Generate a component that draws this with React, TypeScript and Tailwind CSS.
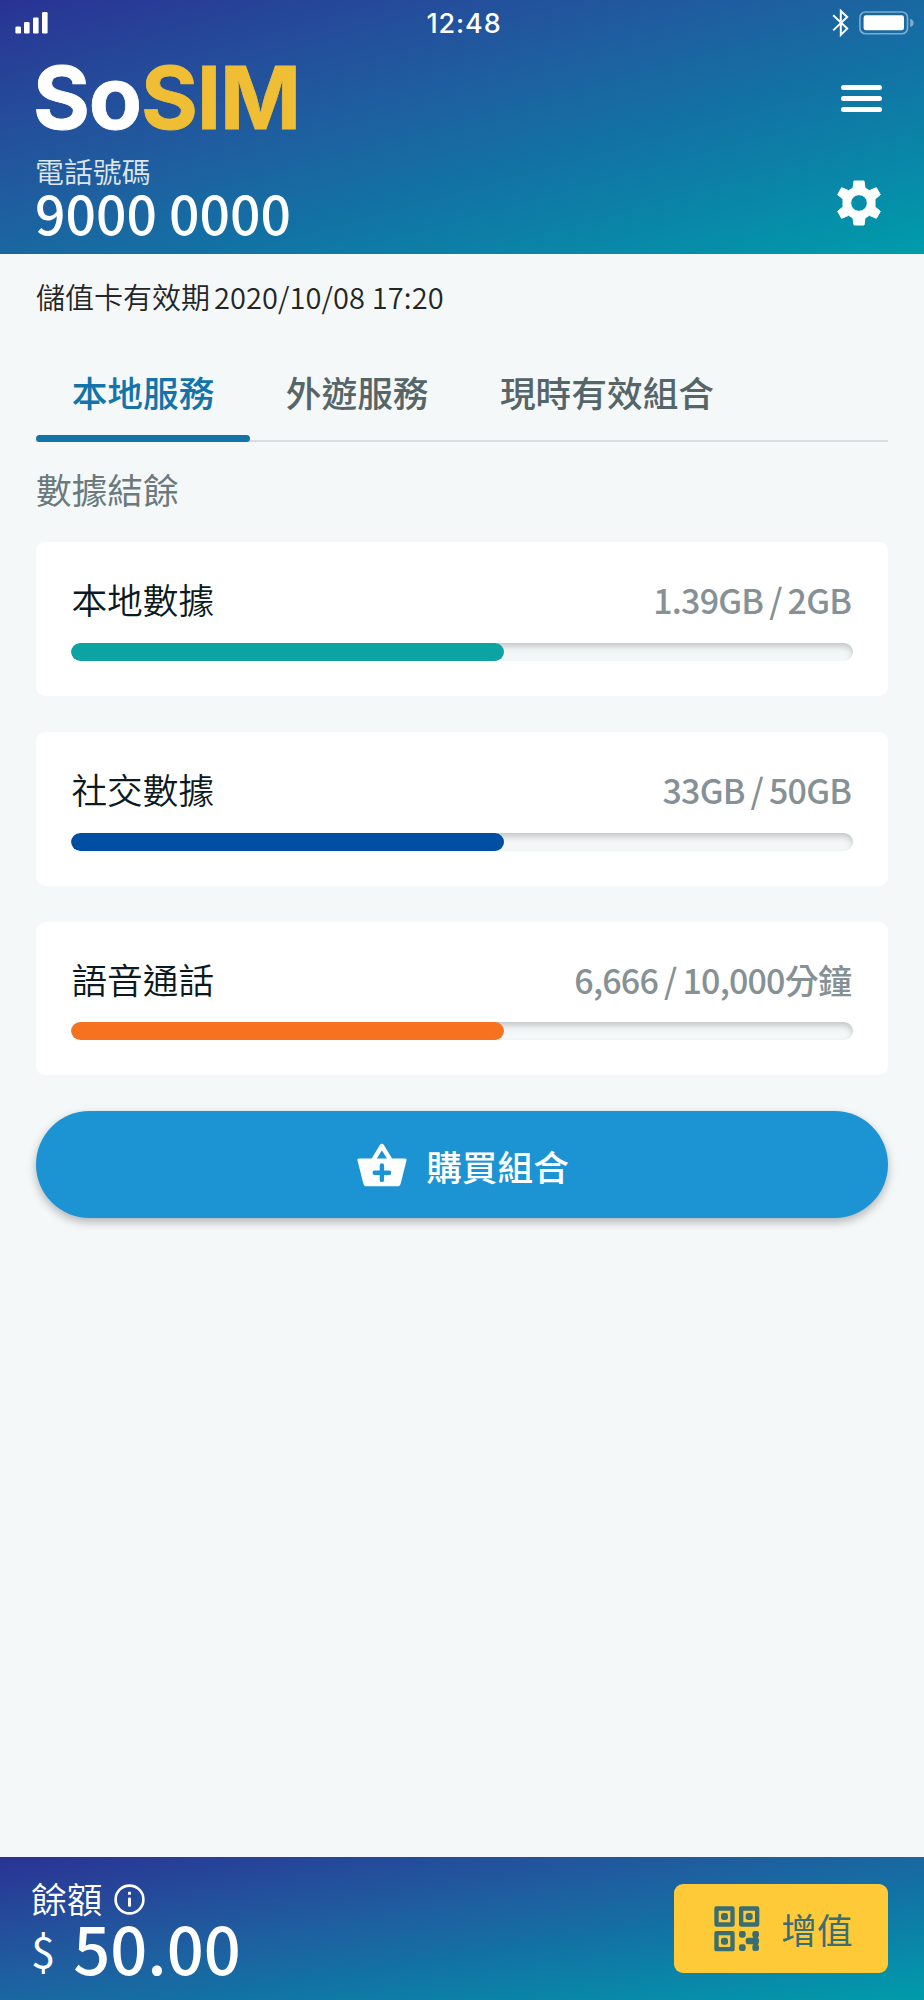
import React from "react";

type Usage = {
  label: string;
  used: string;
  total: string;
  fill: string;
  percent: number;
};

const usages: Usage[] = [
  { label: "本地數據", used: "1.39GB", total: "2GB", fill: "bg-[#0ba4a3]", percent: 55.4 },
  { label: "社交數據", used: "33GB", total: "50GB", fill: "bg-[#004fa3]", percent: 55.4 },
  { label: "語音通話", used: "6,666", total: "10,000分鐘", fill: "bg-[#f67220]", percent: 55.4 },
];

const tabs = ["本地服務", "外遊服務", "現時有效組合"];

function SignalIcon() {
  return (
    <svg width="34" height="22" viewBox="0 0 34 22" fill="#fff">
      <rect x="0.4" y="14.5" width="5.6" height="7" rx="1.2" />
      <rect x="9" y="10" width="5.6" height="11.5" rx="1.2" />
      <rect x="18" y="5.5" width="5.6" height="16" rx="1.2" />
      <rect x="27" y="0" width="5.6" height="21.5" rx="1.2" />
    </svg>
  );
}

function BluetoothIcon() {
  return (
    <svg width="18" height="30" viewBox="0 0 18 30" fill="none" stroke="#fff" strokeWidth="2">
      <path d="M1.2 7.3 15.2 20.6 8.8 26.9V2.9l6.4 6L1.2 22.4" />
    </svg>
  );
}

function BatteryIcon() {
  return (
    <svg width="56" height="24" viewBox="0 0 56 24">
      <rect x="0.9" y="1" width="47.6" height="21.8" rx="5.5" fill="none" stroke="#fff" strokeOpacity="0.45" strokeWidth="1.6" />
      <rect x="4.6" y="4.3" width="40.4" height="15" rx="2.4" fill="#fff" />
      <path d="M51.2 7.8c2.2.6 3.4 2.2 3.4 4.1s-1.2 3.5-3.4 4.1Z" fill="#fff" fillOpacity="0.45" />
    </svg>
  );
}

function GearIcon() {
  return (
    <svg width="44" height="46" viewBox="-66 -69 132 138" fill="#fff" stroke="#fff" strokeWidth="3" strokeLinejoin="round">
      <path
        fillRule="evenodd"
        d="M-15-66H15L18-45 31-37 52-46 64-25 48-12V12L64 25 52 46 31 37 18 45 15 66H-15L-18 45-31 37-52 46-64 25-48 12V-12L-64-25-52-46-31-37-18-45ZM0-25A25 25 0 1 0 0 25 25 25 0 1 0 0-25Z"
      />
    </svg>
  );
}

function BasketIcon() {
  return (
    <svg width="50" height="44" viewBox="0 0 50 44">
      <path d="M16.3 17.2 24.9 3l8.6 14.2" fill="none" stroke="#fff" strokeWidth="4.4" strokeLinejoin="round" />
      <path d="M2 15.6h46c1.2 0 1.7.8 1.5 1.8l-5.8 23c-.5 2-1.6 2.9-3.6 2.9H9.9c-2 0-3.1-.9-3.6-2.9l-5.8-23c-.2-1 .3-1.8 1.5-1.8Z" fill="#fff" />
      <path d="M24.9 22.5v14.4M17.7 29.7h14.4" stroke="#1c94d4" strokeWidth="4.4" strokeLinecap="round" />
    </svg>
  );
}

function InfoIcon() {
  return (
    <svg width="31" height="31" viewBox="0 0 31 31">
      <circle cx="15.5" cy="15.5" r="13.9" fill="none" stroke="#fff" strokeWidth="2.6" />
      <rect x="14" y="7.8" width="3" height="3" rx="0.6" fill="#fff" />
      <rect x="14" y="13.4" width="3" height="9.4" rx="1.2" fill="#fff" />
    </svg>
  );
}

function QrIcon() {
  return (
    <svg width="46" height="46" viewBox="0 0 138 138" fill="#3b6e70">
      <g fill="none" stroke="#3b6e70" strokeWidth="13" strokeLinejoin="round">
        <rect x="7.5" y="7.5" width="48" height="48" />
        <rect x="81.5" y="7.5" width="48" height="48" />
        <rect x="7.5" y="81.5" width="48" height="48" />
      </g>
      <rect x="21" y="21" width="21" height="21" rx="8" />
      <rect x="95" y="21" width="21" height="21" rx="8" />
      <rect x="21" y="95" width="21" height="21" rx="8" />
      <rect x="75" y="75" width="20" height="20" rx="7" />
      <rect x="75" y="115" width="20" height="20" rx="7" />
      <rect x="115" y="75" width="20" height="20" rx="7" />
      <rect x="115" y="95" width="20" height="20" rx="7" />
      <rect x="115" y="115" width="20" height="20" rx="7" />
      <rect x="95" y="95" width="34" height="20" rx="7" />
      <rect x="118" y="84" width="14" height="42" />
    </svg>
  );
}

function UsageCard({ label, used, total, fill, percent }: Usage) {
  return (
    <section className="flex h-[153.7px] flex-col rounded-[9px] bg-white px-[35.4px] pt-[33px]">
      <div className="flex h-12 items-center justify-between">
        <h3 className="text-[35.7px] leading-[48px] font-[350] text-[#0b1a20]">{label}</h3>
        <p className="pt-[2px] pr-[1.5px] text-[34px] leading-[48px] font-medium tracking-[-0.8px] whitespace-pre text-[#859194]">
          {used}
          <span className="mx-[6px]">/</span>
          {total}
        </p>
      </div>
      <div className="mt-[19.6px] h-[18px] overflow-hidden rounded-full bg-[#f3f7f8] shadow-[inset_0_4px_7px_-1px_rgba(0,0,0,0.22)]">
        <div className={`h-full rounded-full ${fill}`} style={{ width: `${percent}%` }} />
      </div>
    </section>
  );
}

export default function App() {
  return (
    <div
      lang="zh-Hant"
      className="flex h-[2000px] w-[924px] flex-col bg-[#f4f8f9] font-['Noto_Sans_CJK_TC',sans-serif]"
    >
      <header className="flex h-[254.4px] shrink-0 flex-col bg-linear-to-br from-[#293294] via-[#1271a4] via-60% to-[#009cab] text-white">
        <div className="grid h-[46px] grid-cols-3 items-center pr-[9px] pl-[15px]">
          <SignalIcon />
          <span className="mr-[2px] justify-self-center font-['Inter',sans-serif] text-[27px] leading-none font-medium tracking-[0.9px]">
            12:48
          </span>
          <div className="flex items-center gap-[9px] justify-self-end">
            <BluetoothIcon />
            <BatteryIcon />
          </div>
        </div>
        <div className="flex flex-1 justify-between pr-[42px] pl-[35px]">
          <div className="flex flex-col">
            <h1 className="mt-[2px] -ml-[2px] h-[104px] font-['Inter',sans-serif] text-[87px] leading-[100px] font-bold tracking-[-1.2px] [-webkit-text-stroke:0.8px_currentColor]">
              So<span className="text-[#efbe35]">SIM</span>
            </h1>
            <p className="h-[36px] text-[28.9px] leading-[36px] font-[350] text-[#dfe7ea]">電話號碼</p>
            <p className="h-[48px] text-[53.5px] leading-[48px] font-medium">9000 0000</p>
          </div>
          <div className="flex flex-col items-end">
            <button aria-label="選單" className="mt-[39px] flex w-[41px] flex-col gap-[6px]">
              <span className="h-[5px] rounded-full bg-white" />
              <span className="h-[5px] rounded-full bg-white" />
              <span className="h-[5px] rounded-full bg-white" />
            </button>
            <button aria-label="設定" className="mt-[68px] mr-px">
              <GearIcon />
            </button>
          </div>
        </div>
      </header>

      <main className="flex flex-1 flex-col px-9">
        <p className="mt-[21.6px] h-10 text-[29px] leading-10 font-[350] text-[#252525]">
          儲值卡有效期<span className="ml-[4px] tracking-[0.1px]">2020/10/08 17:20</span>
        </p>
        <nav className="mt-[34px] flex h-[92px] border-b-2 border-[#d6dfe0]">
          {tabs.map((tab, i) => (
            <button
              key={tab}
              className={
                i === 0
                  ? "relative h-[92px] px-[35.7px] pb-[9px] text-[35.7px] font-medium text-[#1474aa]"
                  : "relative h-[92px] px-[35.7px] pb-[9px] text-[35.7px] font-medium text-[#566568]"
              }
            >
              {tab}
              {i === 0 && <span className="absolute bottom-0 left-0 h-[7px] w-full rounded-full bg-[#1474aa]" />}
            </button>
          ))}
        </nav>
        <h2 className="mt-[23px] h-12 text-[35.7px] leading-[48px] text-[#6b7a7d]">數據結餘</h2>
        <div className="mt-[29.4px] flex flex-col gap-9">
          {usages.map((u) => (
            <UsageCard key={u.label} {...u} />
          ))}
        </div>
        <button className="mt-[36px] flex h-[107px] items-center justify-center gap-[19px] rounded-full bg-[#1c94d4] pt-px pl-[2px] text-[35.7px] font-medium text-white shadow-[0_4px_10px_rgba(0,0,0,0.28)]">
          <BasketIcon />
          <span>購買組合</span>
        </button>
      </main>

      <footer className="flex h-[143px] shrink-0 items-start justify-between bg-linear-to-br from-[#293294] via-[#1271a4] via-60% to-[#009cab] pr-9 pl-[31px] text-white">
        <div className="flex flex-col">
          <div className="mt-[17px] flex h-12 items-center gap-[12px]">
            <span className="text-[35.7px] leading-[48px] font-[350]">餘額</span>
            <span className="pt-[3px]">
              <InfoIcon />
            </span>
          </div>
          <div className="flex h-[50px] items-center">
            <span className="pt-[5px] text-[43.5px] leading-[50px] font-normal">$</span>
            <span className="ml-[18px] text-[65px] leading-[50px] font-medium">50.00</span>
          </div>
        </div>
        <button className="mt-[27px] flex h-[89px] w-[214px] items-center justify-center gap-[21px] rounded-[9px] bg-[#ffca38] pl-[5px] text-[35.7px] text-[#3b6e70]">
          <QrIcon />
          <span>增值</span>
        </button>
      </footer>
    </div>
  );
}
